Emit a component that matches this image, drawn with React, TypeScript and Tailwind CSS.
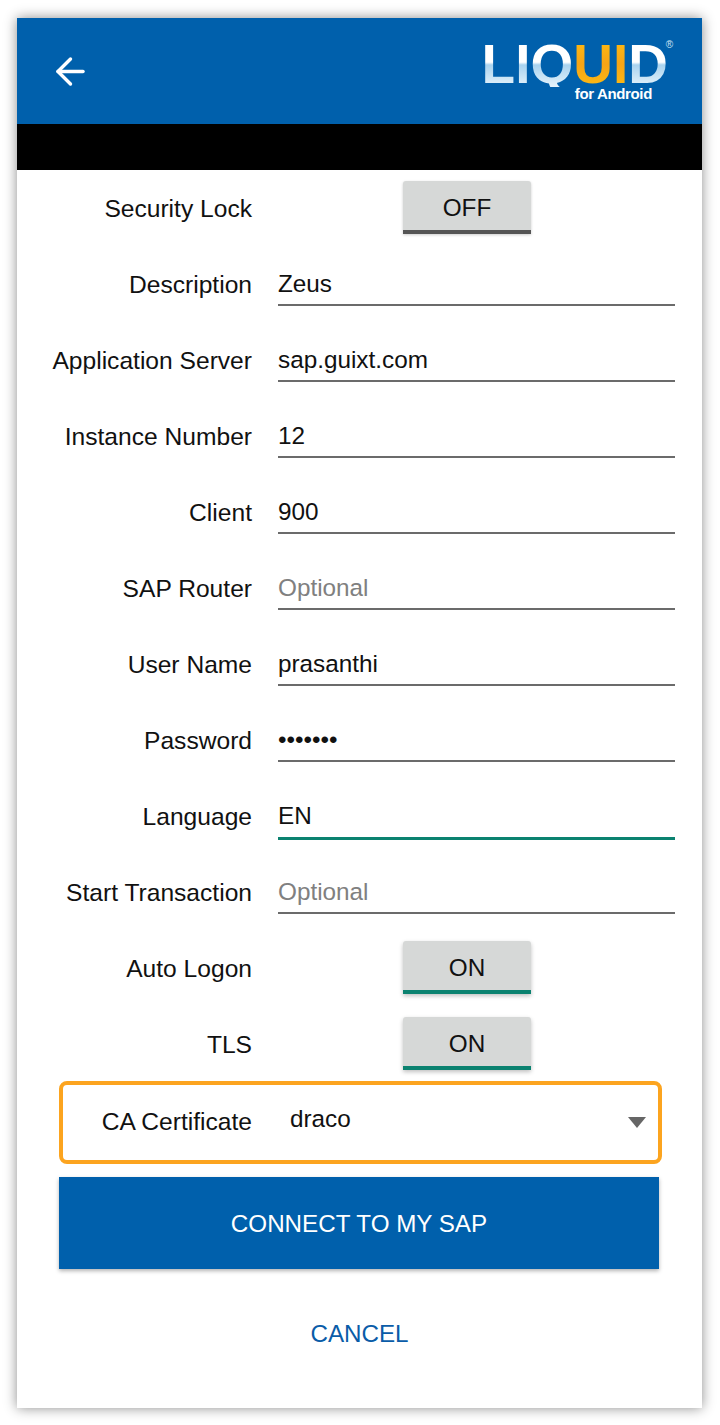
import { ArrowLeft } from 'lucide-react';

const font = { fontFamily: '"Liberation Sans", Arial, sans-serif' };

interface Field {
  label: string;
  value?: string;
  placeholder?: string;
  focused?: boolean;
}

function Row({ label, children }: { label: string; children: React.ReactNode }) {
  return (
    <div className="flex h-[76px] items-center">
      <div className="w-[235px] shrink-0 pt-[3px] text-right text-[24.6px] text-[#111]">{label}</div>
      {children}
    </div>
  );
}

function InputRow({ label, value, placeholder, focused }: Field) {
  return (
    <Row label={label}>
      <div
        className={`ml-[26px] flex w-[397px] items-center pt-[2px] text-[24.3px] ${
          focused ? 'mt-[2px] h-[46px] border-b-[3px] border-[#0b8270]' : 'h-[44px] border-b-2 border-[#6b6b6b]'
        } ${value ? 'text-[#111]' : 'text-[#808080]'}`}
      >
        {value || placeholder}
      </div>
    </Row>
  );
}

function Toggle({ label, on }: { label: string; on: boolean }) {
  return (
    <Row label={label}>
      <div
        className={`mb-[1px] ml-[151px] flex h-[53px] w-[128px] items-center justify-center rounded-t-[3px] border-b-[4px] bg-[#d6d8d7] pt-[6px] text-[24.3px] text-[#111] ${
          on ? 'border-[#0b8270] shadow-[0_2px_4px_rgba(0,0,0,0.25)]' : 'border-[#555] shadow-[0_1px_3px_rgba(0,0,0,0.2)]'
        }`}
      >
        {on ? 'ON' : 'OFF'}
      </div>
    </Row>
  );
}

function Logo() {
  return (
    <div className="flex flex-col items-end">
      <div className="relative flex text-[55px] font-bold leading-[46px] tracking-[0px]">
        <span className="bg-[linear-gradient(180deg,#ffffff_0%,#ffffff_46%,#a9d3ef_52%,#e6f3fb_100%)] bg-clip-text text-transparent">LIQ</span>
        <span className="bg-[linear-gradient(180deg,#fdb913_0%,#f7a416_50%,#fdb913_100%)] bg-clip-text text-transparent">UI</span>
        <span className="bg-[linear-gradient(180deg,#ffffff_0%,#ffffff_46%,#a9d3ef_52%,#e6f3fb_100%)] bg-clip-text text-transparent">D</span>
        <span className="absolute right-[-5px] top-[-1px] text-[10px] font-normal leading-none tracking-normal text-[#cfe4f4]">®</span>
      </div>
      <div className="mr-[16px] mt-[-1px] text-[15px] font-bold leading-[16px] tracking-[-0.35px] text-white">for Android</div>
    </div>
  );
}

export default function App() {
  return (
    <div className="h-[1425px] w-[720px] bg-white pl-[17px] pt-[18px]" style={font}>
      <div className="h-[1390px] w-[685px] bg-white shadow-[0_0_12px_rgba(0,0,0,0.45)]">
        <header className="flex h-[106px] items-center justify-between bg-[#0060ac] pl-[32px] pr-[34px]">
          <ArrowLeft className="h-[43px] w-[43px] text-white" strokeWidth={1.9} />
          <Logo />
        </header>
        <div className="h-[46px] bg-black" />

        <Toggle label="Security Lock" on={false} />
        <InputRow label="Description" value="Zeus" />
        <InputRow label="Application Server" value="sap.guixt.com" />
        <InputRow label="Instance Number" value="12" />
        <InputRow label="Client" value="900" />
        <InputRow label="SAP Router" placeholder="Optional" />
        <InputRow label="User Name" value="prasanthi" />
        <InputRow label="Password" value="•••••••" />
        <InputRow label="Language" value="EN" focused />
        <InputRow label="Start Transaction" placeholder="Optional" />
        <Toggle label="Auto Logon" on />
        <Toggle label="TLS" on />

        <div className="ml-[42px] mt-[-1px] flex h-[83px] w-[603px] items-center rounded-[8px] border-[4px] border-[#fca41f] pb-[3px] pr-[12px]">
          <div className="w-[189px] shrink-0 pt-[2px] text-right text-[24.6px] text-[#111]">CA Certificate</div>
          <div className="mb-[3px] ml-[38px] flex-1 text-[24.3px] text-[#111]">draco</div>
          <div className="mt-[3px] h-0 w-0 border-x-[9px] border-t-[11px] border-x-transparent border-t-[#666]" />
        </div>

        <button className="ml-[42px] mt-[13px] flex h-[92px] w-[600px] items-center justify-center bg-[#0060ac] pt-[2px] text-[24.2px] text-white shadow-[0_2px_4px_rgba(0,0,0,0.3)]">
          CONNECT TO MY SAP
        </button>
        <div className="mt-[46px] text-center text-[24.2px] leading-[38px] text-[#0a5ca8]">CANCEL</div>
      </div>
    </div>
  );
}
